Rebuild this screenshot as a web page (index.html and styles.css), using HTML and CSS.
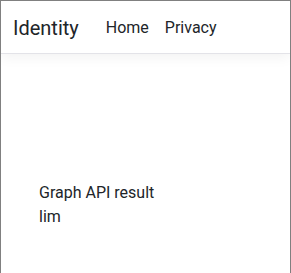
FILE: index.html
```html
<!DOCTYPE html>
<html lang="en">
<head>
  <meta charset="UTF-8" />
  <title>Identity</title>
  <link rel="stylesheet" href="styles.css">
</head>
<body>
  <div class="frame">
    <header>
      <nav class="navbar">
        <a class="brand" href="#">Identity</a>
        <a class="nav-link" href="#">Home</a>
        <a class="nav-link" href="#">Privacy</a>
      </nav>
    </header>

    <main class="content">
      <div>Graph API result</div>
      <div>lim</div>
    </main>
  </div>
</body>
</html>
```

FILE: styles.css
```css
html, body {
  margin: 0;
  padding: 0;
  height: 100%;
  background: #fff;
}
body {
  font-family: Roboto, "Open Sans", sans-serif;
  font-size: 16px;
  line-height: 24px;
  color: #212529;
}
.frame {
  box-sizing: border-box;
  height: 100%;
  border: 1px solid #808080;
  border-bottom: none;
  overflow: hidden;
}
.navbar {
  box-sizing: border-box;
  display: flex;
  align-items: center;
  height: 53px;
  padding: 2px 12px 0;
  border-bottom: 1px solid #e3e3e8;
  box-shadow: 0 4px 12px rgba(0, 0, 0, 0.05);
}
.navbar a {
  text-decoration: none;
  color: #212529;
}
.brand {
  font-size: 20px;
  line-height: 30px;
  margin-right: 27px;
}
.nav-link {
  margin-right: 16px;
}
.content {
  padding: 127px 38px 0;
}
```
